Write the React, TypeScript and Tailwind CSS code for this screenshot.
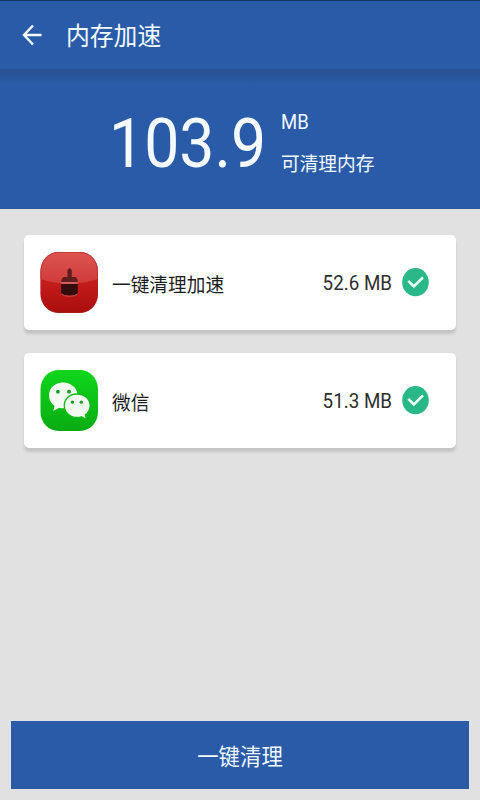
import type { ReactNode } from "react";

function BroomIcon() {
  return (
    <svg viewBox="0 0 58 61" className="h-[61px] w-[58px] shrink-0" aria-hidden="true">
      <defs>
        <linearGradient id="red" x1="0" y1="0" x2="0" y2="1">
          <stop offset="0" stopColor="#c9302e" />
          <stop offset="0.5" stopColor="#c41c1b" />
          <stop offset="1" stopColor="#a90d0d" />
        </linearGradient>
        <linearGradient id="gloss" x1="0" y1="0" x2="0" y2="1">
          <stop offset="0" stopColor="#dc5450" />
          <stop offset="1" stopColor="#cf3b39" />
        </linearGradient>
        <clipPath id="tile">
          <rect x="0.5" width="57.500" height="61" rx="18" ry="19" />
        </clipPath>
      </defs>
      <g clipPath="url(#tile)">
        <rect width="58" height="61" fill="url(#red)" />
        <path d="M0 0H58V27Q29 36 0 27Z" fill="url(#gloss)" />
      </g>
      <rect x="1" y="0.5" width="56.500" height="60" rx="17.500" ry="18.500" fill="none" stroke="#a82422" strokeOpacity="0.5" />
      <path d="M27.500 18Q29.500 14.500 31.800 18V25H35Q37.500 25.500 37.800 30H21.200Q21.500 25.500 24 25H27.500Z" fill="#5d1e20" />
      <path d="M21.200 32H37.800V41Q36 43.500 29.500 43.500T21.200 41Z" fill="#310d0e" />
      <path d="M21.200 31H37.800" stroke="#e28a86" strokeWidth="1" />
      <path d="M21.500 42Q23.500 44.300 29.500 44.300T37.500 42" fill="none" stroke="#c9605c" strokeWidth="0.800" />
    </svg>
  );
}

function WeChatIcon() {
  return (
    <svg viewBox="0 0 58 61" className="h-[61px] w-[58px] shrink-0" aria-hidden="true">
      <defs>
        <linearGradient id="green" x1="0" y1="0" x2="0" y2="1">
          <stop offset="0" stopColor="#10d61c" />
          <stop offset="1" stopColor="#09ac13" />
        </linearGradient>
      </defs>
      <rect x="0.5" width="57.500" height="61" rx="18" ry="19" fill="url(#green)" />
      <path
        d="M23 12.500C14.900 12.500 9 18 9 25.500C9 30 11.300 33.500 14.600 36L13.300 41L19.300 37.700Q21 38.300 23 38.300C31.300 38.300 37.500 32.500 37.500 25.300C37.500 18 31 12.500 23 12.500Z"
        fill="#f3faf2"
      />
      <path
        d="M37 24C29.800 24 24.300 29 24.300 35.500C24.300 42 29.800 47.500 37 47.500Q39.500 47.500 41.500 46.800L46.500 49.500L45.300 45C48.400 42.600 50.200 39.500 50.200 35.500C50.200 29 44.200 24 37 24Z"
        fill="#f3faf2"
        stroke="#0fbb18"
        strokeWidth="1.300"
      />
      <circle cx="17.900" cy="21.700" r="1.900" fill="#159c22" />
      <circle cx="29" cy="21.700" r="1.900" fill="#159c22" />
      <circle cx="32.400" cy="32.200" r="1.600" fill="#159c22" />
      <circle cx="41.300" cy="32.200" r="1.600" fill="#159c22" />
    </svg>
  );
}

function CheckIcon() {
  return (
    <svg viewBox="0 0 27 29" className="h-[29px] w-[27px] shrink-0" aria-hidden="true">
      <ellipse cx="13.500" cy="14.200" rx="13.300" ry="14.100" fill="#2bb888" />
      <path d="M6.300 12.800L11.800 18.500L21 9.300" fill="none" stroke="#effff9" strokeWidth="2.600" />
    </svg>
  );
}

type AppRowProps = {
  icon: ReactNode;
  name: string;
  size: string;
};

function AppRow({ icon, name, size }: AppRowProps) {
  return (
    <li className="flex h-[95px] items-center rounded-[5px] bg-white pr-[27px] pl-[16px] shadow-[0_4px_3px_rgba(0,0,0,0.13)]">
      {icon}
      <span className="mt-[7px] ml-[14px] origin-left scale-y-[1.06] text-[18.700px] leading-none text-[#1d1d1d]">{name}</span>
      <span className="mt-[4px] mr-[10px] ml-auto scale-y-[1.08] text-[18.800px] leading-none text-[#2e2e2e]">{size}</span>
      <CheckIcon />
    </li>
  );
}

const apps: AppRowProps[] = [
  { icon: <BroomIcon />, name: "一键清理加速", size: "52.6 MB" },
  { icon: <WeChatIcon />, name: "微信", size: "51.3 MB" },
];

export default function App() {
  return (
    <div className="flex h-[800px] w-[480px] flex-col overflow-hidden bg-[#e1e1e1] font-[Roboto,'Noto_Sans_CJK_SC',sans-serif]">
      <header className="flex h-[69px] shrink-0 items-center border-t border-[#123a5e] bg-[#2a5ba8] pl-[22px] text-[#f4faff]">
        <svg viewBox="0 0 20 22" className="h-[22px] w-[20px]" fill="none" stroke="currentColor" strokeWidth="2.400" aria-hidden="true">
          <path d="M19.500 11H2.500M11 1.500L2 11L11 20.500" />
        </svg>
        <h1 className="mt-[6px] ml-[24px] scale-y-[1.06] text-[23.800px] leading-none">内存加速</h1>
      </header>

      <section className="flex h-[140px] shrink-0 bg-[#2a5ba8] bg-linear-to-b from-[#27508f] to-[#2a5ba8] to-10% pl-[109px] text-[#f4faff]">
        <p className="mt-[41px] w-[172px] origin-left scale-x-[0.92] text-[68px] leading-[68px]">103.9</p>
        <div className="flex flex-col">
          <span className="mt-[44px] scale-y-[1.06] text-[18.500px] leading-[20px]">MB</span>
          <span className="mt-[22px] scale-y-[1.06] text-[18.700px] leading-[20px]">可清理内存</span>
        </div>
      </section>

      <ul className="flex flex-col gap-[23px] px-[24px] pt-[26px]">
        {apps.map((app) => (
          <AppRow key={app.name} {...app} />
        ))}
      </ul>

      <button type="button" className="mx-[11px] mt-auto mb-[11px] h-[68px] bg-[#2a5ba8] pt-[7px] text-[21.400px] text-[#f4faff]">
        <span className="inline-block scale-y-[1.06]">一键清理</span>
      </button>
    </div>
  );
}
